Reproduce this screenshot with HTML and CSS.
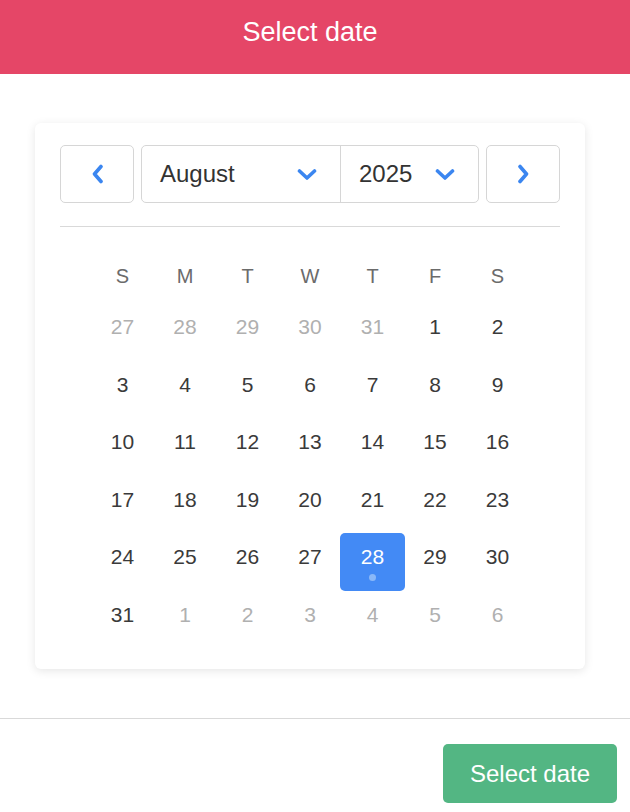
FILE: index.html
```html
<!DOCTYPE html>
<html lang="en">
<head>
    <meta charset="UTF-8">
    <meta name="viewport" content="width=device-width, initial-scale=1.0">
    <title>Select date</title>
    <link rel="stylesheet" href="styles.css">
</head>
<body>
    <header class="topbar">
        <h1>Select date</h1>
    </header>

    <main class="content">
        <div class="calendar">
            <div class="cal-nav">
                <button class="nav-btn" aria-label="Previous month">
                    <svg width="13" height="20" viewBox="0 0 13 20"><path d="M10 2.5 L3.5 10 L10 17.5" fill="none" stroke="#3b86f0" stroke-width="3.6" stroke-linecap="round" stroke-linejoin="round"/></svg>
                </button>
                <div class="picker">
                    <div class="picker-part month">
                        <span>August</span>
                        <svg width="20" height="13" viewBox="0 0 20 13"><path d="M2.5 3 L10 10 L17.5 3" fill="none" stroke="#3b86f0" stroke-width="3.6" stroke-linecap="round" stroke-linejoin="round"/></svg>
                    </div>
                    <div class="picker-part year">
                        <span>2025</span>
                        <svg width="20" height="13" viewBox="0 0 20 13"><path d="M2.5 3 L10 10 L17.5 3" fill="none" stroke="#3b86f0" stroke-width="3.6" stroke-linecap="round" stroke-linejoin="round"/></svg>
                    </div>
                </div>
                <button class="nav-btn" aria-label="Next month">
                    <svg width="13" height="20" viewBox="0 0 13 20"><path d="M3 2.5 L9.5 10 L3 17.5" fill="none" stroke="#3b86f0" stroke-width="3.6" stroke-linecap="round" stroke-linejoin="round"/></svg>
                </button>
            </div>

            <div class="weekdays">
                <span>S</span><span>M</span><span>T</span><span>W</span><span>T</span><span>F</span><span>S</span>
            </div>

            <div class="days">
                <div class="day muted"><span>27</span></div>
                <div class="day muted"><span>28</span></div>
                <div class="day muted"><span>29</span></div>
                <div class="day muted"><span>30</span></div>
                <div class="day muted"><span>31</span></div>
                <div class="day"><span>1</span></div>
                <div class="day"><span>2</span></div>

                <div class="day"><span>3</span></div>
                <div class="day"><span>4</span></div>
                <div class="day"><span>5</span></div>
                <div class="day"><span>6</span></div>
                <div class="day"><span>7</span></div>
                <div class="day"><span>8</span></div>
                <div class="day"><span>9</span></div>

                <div class="day"><span>10</span></div>
                <div class="day"><span>11</span></div>
                <div class="day"><span>12</span></div>
                <div class="day"><span>13</span></div>
                <div class="day"><span>14</span></div>
                <div class="day"><span>15</span></div>
                <div class="day"><span>16</span></div>

                <div class="day"><span>17</span></div>
                <div class="day"><span>18</span></div>
                <div class="day"><span>19</span></div>
                <div class="day"><span>20</span></div>
                <div class="day"><span>21</span></div>
                <div class="day"><span>22</span></div>
                <div class="day"><span>23</span></div>

                <div class="day"><span>24</span></div>
                <div class="day"><span>25</span></div>
                <div class="day"><span>26</span></div>
                <div class="day"><span>27</span></div>
                <div class="day selected"><span>28</span><i class="today-dot"></i></div>
                <div class="day"><span>29</span></div>
                <div class="day"><span>30</span></div>

                <div class="day"><span>31</span></div>
                <div class="day muted"><span>1</span></div>
                <div class="day muted"><span>2</span></div>
                <div class="day muted"><span>3</span></div>
                <div class="day muted"><span>4</span></div>
                <div class="day muted"><span>5</span></div>
                <div class="day muted"><span>6</span></div>
            </div>
        </div>
    </main>

    <footer class="footer">
        <button class="confirm-btn">Select date</button>
    </footer>
</body>
</html>
```

FILE: styles.css
```css
body {
    margin: 0;
    background: #fff;
    font-family: "Liberation Sans", Arial, sans-serif;
    color: #3a3a3a;
}
.topbar {
    height: 74px;
    background-color: #e54667;
    box-sizing: border-box;
    padding: 17px 10px 0 0;
}
.topbar h1 {
    margin: 0;
    text-align: center;
    color: #fff;
    font-weight: normal;
    font-size: 27px;
    line-height: 31px;
}
.content {
    padding: 49px 45px 49px 35px;
}
.calendar {
    width: 500px;
    padding: 22px 25px 21px;
    background: #fff;
    border-radius: 6px;
    box-shadow: 0 2px 10px rgba(0, 0, 0, 0.10);
}
.cal-nav {
    display: flex;
    gap: 7px;
    height: 58px;
    padding-bottom: 23px;
    border-bottom: 1px solid #d9d9d9;
}
.nav-btn {
    width: 74px;
    height: 58px;
    padding: 0;
    background: #fff;
    border: 1px solid #d6d6d6;
    border-radius: 5px;
    display: flex;
    align-items: center;
    justify-content: center;
}
.picker {
    flex: 1;
    display: flex;
    border: 1px solid #d6d6d6;
    border-radius: 5px;
}
.picker-part {
    display: flex;
    align-items: center;
    justify-content: space-between;
    padding: 0 23px 0 18px;
    font-size: 24px;
    color: #333;
}
.picker-part.month {
    width: 199px;
    box-sizing: border-box;
    border-right: 1px solid #d6d6d6;
}
.picker-part.year {
    flex: 1;
}
.weekdays {
    display: grid;
    grid-template-columns: repeat(7, 62.5px);
    width: 437.5px;
    margin: 30px auto 0;
    height: 38px;
    align-items: center;
    text-align: center;
    font-size: 20px;
    color: #6b6b6b;
}
.days {
    display: grid;
    grid-template-columns: repeat(7, 62.5px);
    grid-auto-rows: 57.5px;
    width: 437.5px;
    margin: 8px auto 0;
}
.day {
    height: 58px;
    box-sizing: border-box;
    padding-top: 12px;
    display: flex;
    flex-direction: column;
    align-items: center;
    font-size: 21px;
    line-height: 24px;
    color: #3a3a3a;
}
.day.muted {
    color: #b0b0b0;
}
.day.selected {
    margin: 0 -1.25px;
    background: #438af5;
    border-radius: 5px;
    color: #fff;
}
.today-dot {
    width: 7px;
    height: 7px;
    margin-top: 5px;
    border-radius: 50%;
    background: #8ab8f8;
}
.footer {
    border-top: 1px solid #d9d9d9;
    padding: 25px 13px 0;
    display: flex;
    justify-content: flex-end;
}
.confirm-btn {
    width: 174px;
    height: 59px;
    border: none;
    border-radius: 5px;
    background: #53b683;
    color: #fff;
    font-family: "Liberation Sans", Arial, sans-serif;
    font-size: 24px;
}
```
